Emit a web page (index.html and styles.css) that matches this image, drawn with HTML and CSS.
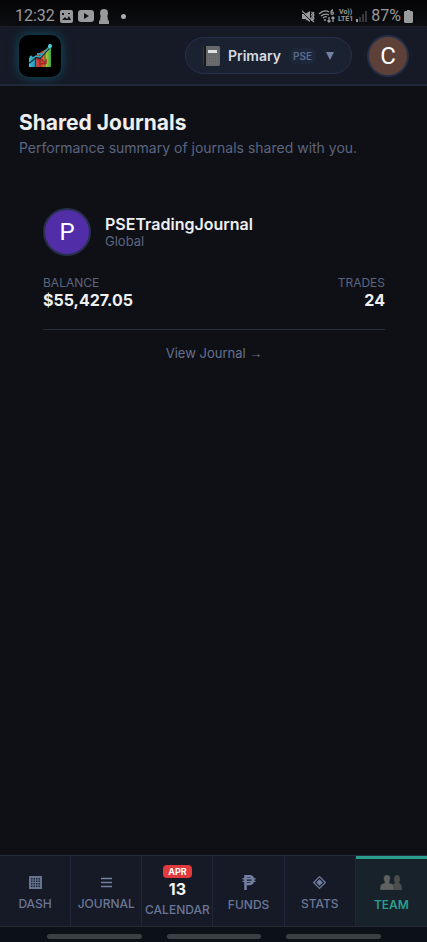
FILE: index.html
```html
<!DOCTYPE html>
<html lang="en">
<head>
<meta charset="utf-8">
<meta name="viewport" content="width=device-width, initial-scale=1">
<title>Shared Journals</title>
<link rel="stylesheet" href="styles.css">
</head>
<body>
<div class="status">
  <div class="status-group">
    <span class="clock">12:32</span>
    <svg width="13" height="13" viewBox="0 0 13 13"><rect width="13" height="13" rx="2" fill="#999a9b"/><path d="M2 10l3-3 2 2 2-3 2 4zM2 3h2v2H2zM8 3h2v1H8z" fill="#111317"/></svg>
    <svg width="16" height="12" viewBox="0 0 16 12"><rect width="16" height="12" rx="3" fill="#999a9b"/><path d="M6 3l5 3-5 3z" fill="#111317"/></svg>
    <svg width="10" height="15" viewBox="0 0 10 15"><circle cx="5" cy="4" r="4" fill="#999a9b"/><path d="M2 5h6l1 6 1 1v3H0v-3l1-1z" fill="#999a9b"/></svg>
    <svg class="dot" width="5" height="5" viewBox="0 0 5 5"><circle cx="2.500" cy="2.500" r="2.500" fill="#aaabac"/></svg>
  </div>
  <div class="status-group status-right">
    <svg width="13" height="13" viewBox="0 0 13 13" fill="none" stroke="#999a9b"><path d="M0 4h3l5-3v11L3 9H0z" fill="#999a9b" stroke="none"/><path d="M9.500 2l1 1-1 2 1 1-1 2 1 1-1 2M12 2l-1 2 1 1-1 2 1 1-1 2" stroke-width="1.200"/><path d="M0 2l11 11" stroke="#0a0b0d" stroke-width="1"/><path d="M0 1l12 11" stroke-width="1.200"/></svg>
    <svg width="17" height="14" viewBox="0 0 17 14" fill="none" stroke="#999a9b" stroke-width="1.300"><path d="M1 5q5-5 10-2M3 7q4-3 8-1M5 9q2-2 4-1"/><circle cx="7" cy="11" r="1" fill="#999a9b" stroke="none"/><path d="M15 1q-2 0-2 3a1.200 1.200 0 1 0 1-1M11 8v5M9.500 11.500l1.500 1.500 1.500-1.500M15 13V8M13.500 9.500L15 8l1.500 1.500"/></svg>
    <span class="lte"><span>Vo))</span><span>LTE1</span></span>
    <svg width="12" height="12" viewBox="0 0 12 12"><path d="M0 9h2v3H0z" fill="#999a9b"/><path d="M3 7h2v5H3zM6 4h2v8H6zM9 1h2v11H9z" fill="#37393c"/></svg>
    <span class="clock">87%</span>
    <svg width="9" height="13" viewBox="0 0 9 13"><path d="M3 0h3v1h2l1 1v10l-1 1H1l-1-1V2l1-1h2z" fill="#999a9b"/></svg>
  </div>
</div>

<header class="top">
  <a class="logo" href="#" aria-label="Home">
    <svg width="26" height="26" viewBox="0 0 26 26">
      <defs><linearGradient id="bars" x1="0" x2="1" y1="0" y2="0"><stop offset="0" stop-color="#3ac4ea"/><stop offset=".28" stop-color="#268cab"/><stop offset=".36" stop-color="#d83a32"/><stop offset=".62" stop-color="#e4472c"/><stop offset=".75" stop-color="#b9c936"/><stop offset="1" stop-color="#36a947"/></linearGradient></defs>
      <path d="M2 24V15l7-2 5-4 4-2 6-5v22z" fill="url(#bars)"/>
      <path d="M8.500 14v10M13 12v12M18 10v14" stroke="#12252b" stroke-width=".7"/>
      <path d="M10 16l5 1 4 4M13 21l6-1v-4" stroke="#a5262b" stroke-width="1.500" fill="none"/>
      <path d="M2 20l7-6 4 1 9-10" stroke="#10242c" stroke-width="2" fill="none"/>
      <path d="M2 19l7-6 4 1L23 3" stroke="#39a6bb" stroke-width="1.300" fill="none"/>
      <circle cx="23" cy="3" r="2" fill="#55cfe0"/><circle cx="4" cy="14" r="1.500" fill="#36aebf"/><path d="M10 10h5v2h-5z" fill="#309baa"/>
    </svg>
  </a>
  <div class="top-actions">
    <button class="picker" type="button">
      <svg width="17" height="20" viewBox="0 0 17 20"><path d="M0 1l2-1v20l-2-1z" fill="#4a3424"/><path d="M2 0h14l1 1v18l-1 1H2z" fill="#666768"/><path d="M1 0h2v20H1z" fill="#161517"/><path d="M5 4h9v3H5z" fill="#e0e1e2"/><path d="M5 11h10M5 14h10M5 17h10" stroke="#7a7b7c" stroke-dasharray="1 1"/></svg>
      <span class="picker-name">Primary</span>
      <span class="tag">PSE</span>
      <svg class="caret" width="8" height="8" viewBox="0 0 8 8"><path d="M0 0h8L4 8z" fill="#7280a4"/></svg>
    </button>
    <button class="avatar avatar-user" type="button" aria-label="Account">C</button>
  </div>
</header>

<main class="content">
  <h1>Shared Journals</h1>
  <p class="lead">Performance summary of journals shared with you.</p>
  <article class="card">
    <div class="owner">
      <span class="avatar avatar-owner">P</span>
      <div>
        <h2>PSETradingJournal</h2>
        <p class="scope">Global</p>
      </div>
    </div>
    <dl class="figures">
      <div><dt>BALANCE</dt><dd>$55,427.05</dd></div>
      <div class="figure-end"><dt>TRADES</dt><dd>24</dd></div>
    </dl>
    <a class="view" href="#">View Journal <span class="arrow">→</span></a>
  </article>
</main>

<nav class="tabs">
  <a class="tab" href="#"><svg width="13" height="13" viewBox="0 0 13 13"><path d="M0 0h13v13H0z" fill="#66738f"/><path d="M2 2h1.500v1.500H2zM4.500 2H6v1.500H4.500zM7 2h1.500v1.500H7zM9.500 2H11v1.500H9.500zM2 4.500h1.500V6H2zM4.500 4.500H6V6H4.500zM7 4.500h1.500V6H7zM9.500 4.500H11V6H9.500zM2 7h1.500v1.500H2zM4.500 7H6v1.500H4.500zM7 7h1.500v1.500H7zM9.500 7H11v1.500H9.500zM2 9.500h1.500V11H2zM4.500 9.500H6V11H4.500zM7 9.500h1.500V11H7zM9.500 9.500H11V11H9.500z" fill="#1d2433"/></svg><span>DASH</span></a>
  <a class="tab" href="#"><svg width="11" height="13" viewBox="0 0 11 13"><path d="M0 2.500h11M0 6.500h11M0 10.500h11" stroke="#7280a4" stroke-width="1.400"/></svg><span>JOURNAL</span></a>
  <a class="tab tab-calendar" href="#"><b class="month">APR</b><b class="day">13</b><span>CALENDAR</span></a>
  <a class="tab" href="#"><svg width="14" height="15" viewBox="0 0 14 15" fill="none" stroke="#7280a4"><path d="M3.500 15V1.200h4q3.500 0 3.500 3.700T7.500 9h-4" stroke-width="2.500"/><path d="M.5 3.800h13M.5 6.400h13" stroke-width="1.400"/></svg><span>FUNDS</span></a>
  <a class="tab" href="#"><svg width="13" height="13" viewBox="0 0 13 13"><path d="M6.500.7l5.800 5.800-5.800 5.800L.7 6.500z" fill="none" stroke="#7280a4" stroke-width="1.200"/><path d="M6.500 3.200l3.300 3.300-3.300 3.300-3.300-3.300z" fill="#7280a4"/></svg><span>STATS</span></a>
  <a class="tab tab-active" href="#" aria-current="page"><svg width="22" height="15" viewBox="0 0 22 15"><path d="M12 15q0-5 1-6l2-1-1-3q0-5 3-5t3 5l-1 3q3 1 3 7z" fill="#4b4d4c"/><path d="M0 15q0-5 2-6l3-1-1-3q-1-5 3-5t3 5L9 8l3 1q2 1 2 6z" fill="#606260" stroke="#35403f" stroke-width=".5"/></svg><span>TEAM</span></a>
</nav>
<div class="gestures"><i></i><i></i><i></i></div>
</body>
</html>
```
FILE: styles.css
```css
* { box-sizing: border-box; }
body {
  margin: 0;
  min-height: 100vh;
  display: flex;
  flex-direction: column;
  background: #0f1015;
  color: #eeeff1;
  font-family: Inter, "Liberation Sans", sans-serif;
}
h1, h2, p, dl, dd { margin: 0; }
a { color: inherit; text-decoration: none; }
button { font: inherit; color: inherit; }

.status {
  height: 26px;
  padding: 6px 14px 0 15px;
  display: flex;
  justify-content: space-between;
  background: linear-gradient(#040405, #0d0e11);
  color: #999a9b;
}
.status-group { display: flex; align-items: center; gap: 5px; }
.status-right { gap: 3px; }
.clock { font: 16px/20px Roboto, sans-serif; }
.dot { margin-left: 7px; }
.lte {
  display: flex;
  flex-direction: column;
  align-items: center;
  font: 700 7px/7px Roboto, sans-serif;
}

.top {
  height: 60px;
  padding: 0 18px 0 19px;
  display: flex;
  align-items: center;
  justify-content: space-between;
  background: #161a26;
  border-top: 1px solid #1b1e28;
  border-bottom: 2px solid #20283a;
}
.logo {
  width: 42px;
  height: 42px;
  display: grid;
  place-items: center;
  border-radius: 10px;
  background: #000;
  box-shadow: 0 0 12px #10546a;
}
.top-actions { display: flex; align-items: center; gap: 15px; }
.picker {
  height: 37px;
  padding: 0 17px;
  display: flex;
  align-items: center;
  gap: 8px;
  border: 1px solid #25304a;
  border-radius: 19px;
  background: #1a2130;
}
.picker-name { font-size: 14px; font-weight: 600; color: #d8dae0; }
.tag {
  padding: 2px 4px;
  border-radius: 6px;
  background: #1d273a;
  color: #5c6c90;
  font-size: 10px;
  line-height: 12px;
  font-weight: 600;
}
.caret { margin-left: 2px; }
.avatar {
  display: grid;
  place-items: center;
  flex: none;
  padding: 0;
  border-radius: 50%;
  border: 2px solid #27304a;
  color: #fff;
  font-family: Roboto, sans-serif;
}
.avatar-user { width: 42px; height: 42px; background: #5d4037; font-size: 24px; }
.avatar-owner { width: 48px; height: 48px; background: #512da8; font-size: 24px; }

.content { flex: 1; padding: 24px 18px 24px 19px; }
h1 { font-size: 21px; line-height: 26px; font-weight: 700; }
.lead { font-size: 14px; line-height: 24px; color: #5b6580; }
.card { padding: 48px 24px 0; }
.owner { display: flex; align-items: center; gap: 14px; }
h2 { font-size: 16px; line-height: 18px; font-weight: 600; }
.scope { font-size: 13px; line-height: 17px; color: #5b6580; }
.figures { display: flex; justify-content: space-between; margin-top: 18px; }
.figures dt { font-size: 12px; line-height: 17px; color: #5b6580; }
.figures dd { font-size: 16px; line-height: 18px; font-weight: 700; }
.figure-end { text-align: right; }
.view {
  display: block;
  margin-top: 20px;
  padding-top: 14px;
  border-top: 1px solid #262e42;
  text-align: center;
  font-size: 13px;
  line-height: 18px;
  color: #66718f;
}
.arrow { font-family: "Liberation Sans", sans-serif; }

.tabs {
  display: grid;
  grid-template-columns: repeat(6, 1fr);
  height: 72px;
  background: #161a26;
  border-top: 1px solid #252c3b;
  border-bottom: 1px solid #252c36;
}
.tab {
  min-width: 0;
  padding-top: 4px;
  display: flex;
  flex-direction: column;
  align-items: center;
  justify-content: center;
  gap: 8px;
  border-right: 1px solid #20273a;
  color: #6a7696;
  font-size: 12px;
  line-height: 14px;
  font-weight: 500;
}
.tab-calendar { padding-top: 0; gap: 2px; }
.month {
  padding: 0 5px;
  border-radius: 4px;
  background: #e03a3c;
  color: #fff;
  font-size: 9px;
  line-height: 13px;
  font-weight: 700;
}
.day { color: #f4f5f7; font-size: 16px; line-height: 18px; font-weight: 700; }
.day + span { margin-top: 3px; }
.tab-active {
  padding-top: 2px;
  border-top: 3px solid #2a9d8f;
  border-right: 0;
  background: #18222b;
  color: #2a9d8f;
  font-weight: 600;
}
.gestures {
  height: 15px;
  padding: 0 46px 0 47px;
  display: flex;
  align-items: center;
  gap: 25px;
  background: #0b1117;
}
.gestures i { flex: 1; height: 5px; margin-top: 3px; border-radius: 3px; background: #3d4043; }
```
